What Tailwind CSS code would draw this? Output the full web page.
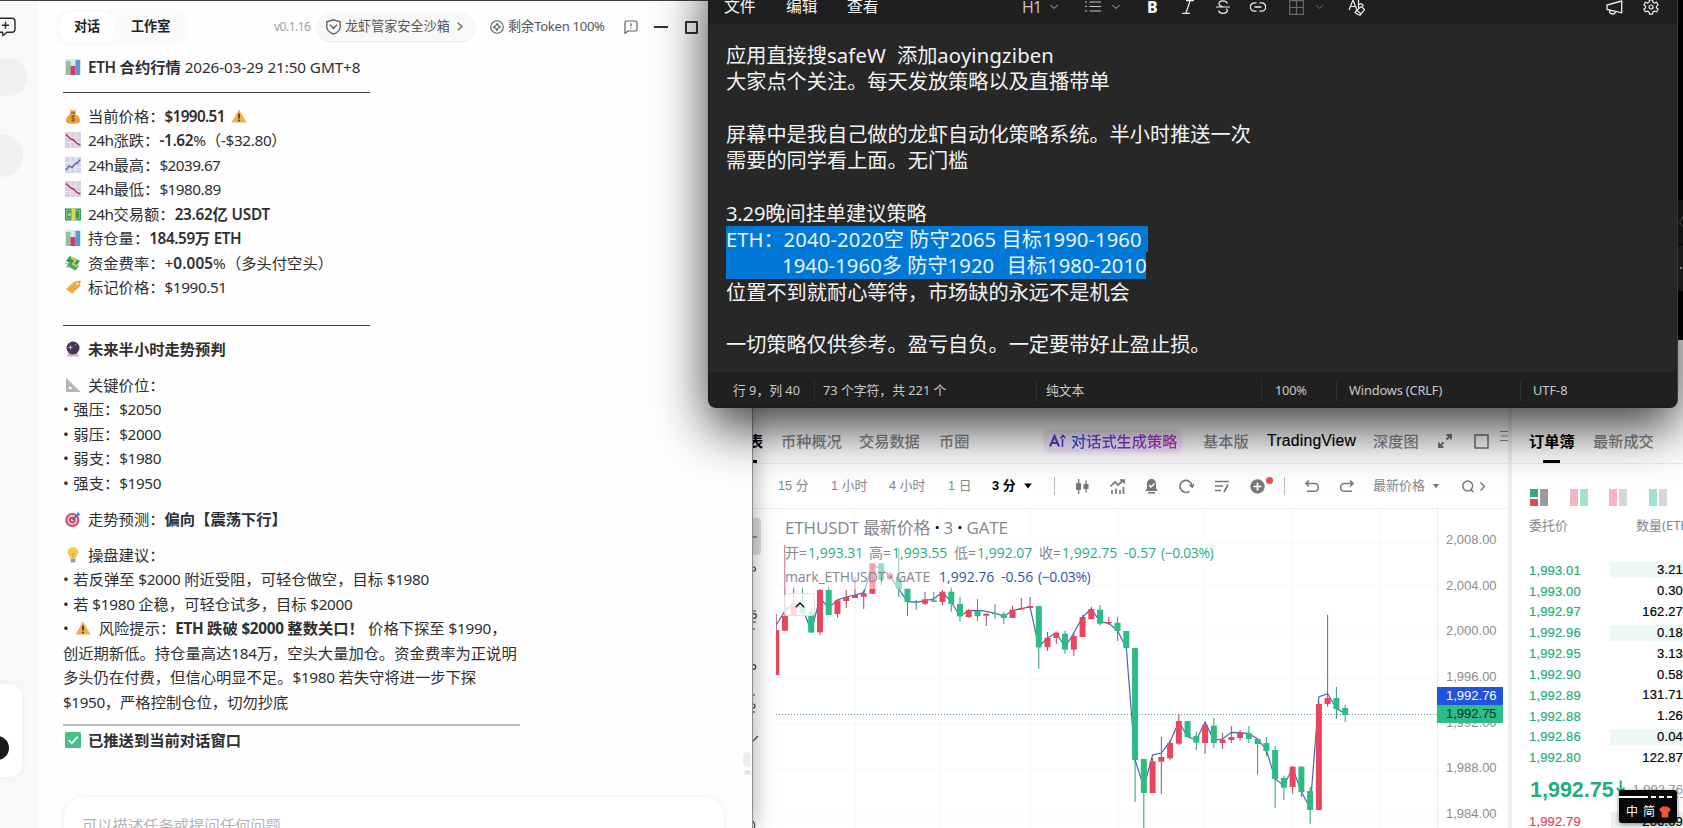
<!DOCTYPE html>
<html lang="zh-CN">
<head>
    <meta charset="UTF-8">
    <meta name="viewport" content="width=device-width, initial-scale=1.0">
    <title>ETH 合约行情</title>
    <script src="https://cdn.jsdelivr.net/npm/@tailwindcss/browser@4"></script>
</head>
<body class="relative w-[1683px] h-[828px] overflow-hidden bg-white font-['Noto_Sans','Noto_Sans_CJK_SC',sans-serif]">

    <!-- Shared icons -->
    <svg class="hidden">
        <symbol id="i-bars" viewBox="0 0 16 16"><rect width="16" height="16" fill="#dbe9ee"/><rect x="1" y="2" width="4.5" height="14" fill="#8fc29b"/><rect x="5.5" y="7" width="5" height="9" fill="#d23a6e"/><rect x="10.5" y="1" width="4.5" height="15" fill="#5a98d3"/></symbol>
        <symbol id="i-bag" viewBox="0 0 16 16"><path d="M5 1.5l3 1 3-1-1.2 4C13 7 15 10 15 12.500c0 2.500-2 3.200-7 3.200S1 15 1 12.500C1 10 3 7 6.200 5.500z" fill="#e9a23b"/><path d="M5.500 5h5" stroke="#8f5a1c" stroke-width="1.300"/><path d="M9.800 8.500c-1-1-3.500-.7-3.300.8.2 1.300 3.200.8 3.300 2.300.1 1.500-2.500 1.700-3.500.6M8 7.300v6.200" stroke="#8c4a16" fill="none"/></symbol>
        <symbol id="i-warn" viewBox="0 0 16 16"><path d="M8 1.500L15.500 14.500H.5z" fill="#f0ae4c"/><path d="M8 5.500v5" stroke="#3a2c18" stroke-width="1.600"/><circle cx="8" cy="12.500" r=".9" fill="#3a2c18"/></symbol>
        <symbol id="i-down" viewBox="0 0 16 16"><rect width="16" height="16" fill="#dccfdd"/><path d="M0 5.500h16M0 10.500h16M5.500 0v16M10.500 0v16" stroke="#f1eaf3" stroke-width=".8"/><path d="M.8 2.500L6 7l2.500 1 3 3.200L15.300 13" stroke="#b0386a" stroke-width="1.500" fill="none"/></symbol>
        <symbol id="i-up" viewBox="0 0 16 16"><rect width="16" height="16" fill="#d3d7e8"/><path d="M0 5.500h16M0 10.500h16M5.500 0v16M10.500 0v16" stroke="#f0f1f8" stroke-width=".8"/><path d="M.8 13L4 9l3 1.500L11 6l1 .5 3.300-4" stroke="#5c6fb4" stroke-width="1.500" fill="none"/></symbol>
        <symbol id="i-cash" viewBox="0 0 16 16"><rect y="2.500" width="16" height="12" fill="#2f9e50"/><rect x="1.500" y="4.500" width="13" height="8" fill="none" stroke="#8fd19a" stroke-width=".8"/><circle cx="4.500" cy="8.500" r="2" fill="#8fd19a"/><rect x="6.500" y="2.500" width="4" height="12" fill="#f0cf4b"/></symbol>
        <symbol id="i-fly" viewBox="0 0 16 16"><path d="M5 1l10 5-4 5L1 6z" fill="#2f9e50"/><path d="M4 7l10 4-3.500 4.500L2 11z" fill="#3fae5f"/><path d="M6 2.500l4.500 3L8 9l4 2.500" stroke="#d9d36a" stroke-width="1.800" fill="none"/><path d="M0 8l3 1M1 12l3 0" stroke="#8fa89a"/></symbol>
        <symbol id="i-tag" viewBox="0 0 16 16"><path d="M1 10L9.500 2.500 15 2l.3 5L7 14.800z" fill="#efa945"/><circle cx="12.700" cy="4.600" r="1.200" fill="#fff"/><path d="M13 4.500c1-3 2.500-3.500 2.800-1" stroke="#b07a3c" stroke-width=".8" fill="none"/></symbol>
        <symbol id="i-ball" viewBox="0 0 16 16"><path d="M3.500 12h9l1.500 3.500H2z" fill="#cdb4dc"/><circle cx="8" cy="7" r="6.500" fill="#4a3550"/><path d="M5.500 4.500v4M3.500 6.500h4" stroke="#d9b8e0"/><circle cx="10.500" cy="4" r=".8" fill="#b58fc4"/></symbol>
        <symbol id="i-ruler" viewBox="0 0 16 16"><path d="M1 .8L15.500 15H1zM4 8.500V12h3.700z" fill="#b4b4ba" fill-rule="evenodd"/></symbol>
        <symbol id="i-target" viewBox="0 0 16 16"><circle cx="7.300" cy="9" r="7" fill="#d8456c"/><circle cx="7.300" cy="9" r="4.900" fill="#f3d9e2"/><circle cx="7.300" cy="9" r="3.400" fill="#d8456c"/><circle cx="7.300" cy="9" r="1.200" fill="#fff"/><path d="M7.500 9L13 3.500" stroke="#3c6d9e" stroke-width="1.200"/><path d="M11 4l2-3.500.8 2 2 .6L13 5.500z" fill="#3f8fd8"/></symbol>
        <symbol id="i-bulb" viewBox="0 0 16 16"><path d="M8 .3c3.500 0 5.300 2.500 5.300 5 0 2.700-2.300 3.700-2.600 6H5.300C5 9 2.700 8 2.700 5.300c0-2.500 1.800-5 5.300-5z" fill="#f7c948"/><path d="M6.500 6l1.500 1.500L9.500 6M8 7.500V11" stroke="#d99a28" stroke-width=".8" fill="none"/><rect x="5.600" y="11.500" width="4.800" height="4" rx="1" fill="#9a9aa2"/></symbol>
        <symbol id="i-check" viewBox="0 0 16 16"><rect width="16" height="16" rx="1.500" fill="#43c082"/><path d="M3.500 8l3.200 3.200 6-6.400" stroke="#fff" stroke-width="1.700" fill="none"/></symbol>
        <symbol id="i-chev" viewBox="0 0 8 6"><path d="M.5 1L4 4.500 7.500 1" stroke="currentColor" fill="none"/></symbol>
    </svg>

    <!-- Exchange page -->
    <section class="absolute left-[753px] top-[400px] w-[930px] h-[428px] flex bg-white text-[#86878b]">
        <div class="w-[755px] flex flex-col">
            <nav class="h-[64px] pt-[19px] flex items-center text-[15.2px] font-medium whitespace-nowrap border-b border-[#ececec] overflow-hidden">
                <div class="relative w-[28px] h-full flex items-center overflow-hidden text-black font-bold"><span class="-ml-[5px]">表</span><span class="absolute left-0 bottom-0 w-[4px] h-[3px] bg-black"></span></div>
                <div class="w-[78px]">币种概况</div>
                <div class="w-[80px]">交易数据</div>
                <div class="w-[107px]">币圈</div>
                <div class="w-[157px] flex items-center">
                    <div class="flex items-center gap-[5px] px-[3px] h-[18px] rounded bg-[#e3c9f5]/40 shadow-[0_0_5px_1px_#e3c9f5]">
                        <svg class="w-[17px] h-[14px]" viewBox="0 0 17 14" fill="none" stroke="#5a35d8" stroke-width="2"><path d="M1 12.500L5.500 2l4.500 10.500M3 9h5"/><path d="M13.500 13V5M11.500 4.500L14 1.500l2 2.500" stroke-width="1.600"/></svg>
                        <span class="bg-gradient-to-r from-[#2d55d8] via-[#7a35d5] to-[#c32bc0] bg-clip-text text-transparent">对话式生成策略</span>
                    </div>
                </div>
                <div class="w-[64px]">基本版</div>
                <div class="w-[106px] text-[15.800px] text-black font-['Liberation_Sans',sans-serif] tracking-[0.2px] [-webkit-text-stroke:0.15px_black]">TradingView</div>
                <div class="w-[65px]">深度图</div>
                <svg class="w-[14px] h-[14px] mr-[22px]" viewBox="0 0 14 14" fill="none" stroke="#6f7074" stroke-width="1.800"><path d="M8.500 5.500L13 1M8.500 1H13v4.500M5.500 8.500L1 13M1 8.500V13h4.500"/></svg>
                <svg class="w-[15px] h-[15px] mr-[11px]" viewBox="0 0 15 15" fill="none" stroke="#6f7074" stroke-width="1.500"><path d="M1 1h13v13H1z"/></svg>
                <svg class="w-[8px] h-[12px] -mt-[10px]" viewBox="0 0 8 12" stroke="#8b8b8b"><path d="M0 1.500h8M1 6h7M0 10.500h8"/></svg>
            </nav>
            <div class="h-[45px] pl-[25px] flex items-center text-[12.8px] whitespace-nowrap border-b border-[#ececec] font-['Liberation_Sans','Noto_Sans_CJK_SC',sans-serif]">
                <span class="w-[53px]">15 分</span>
                <span class="w-[58px]">1 小时</span>
                <span class="w-[59px]">4 小时</span>
                <span class="w-[44px]">1 日</span>
                <span class="w-[32px] text-black font-bold">3 分</span>
                <svg class="w-[8px] h-[6px] mr-[22px]" viewBox="0 0 9 7"><path d="M0 .5h9L4.500 6.500z" fill="#000"/></svg>
                <span class="w-px h-[18px] bg-[#bdbdbd] mr-[20px]"></span>
                <svg class="w-[14px] h-[15px] mr-[21px]" viewBox="0 0 14 15" fill="#77787c"><path d="M1 4h5v7H1zM3 0h1.300v15H3zM8.500 5h5v5h-5zM10.400 1.500h1.300v12h-1.300z"/></svg>
                <svg class="w-[15px] h-[15px] mr-[20px]" viewBox="0 0 15 15" fill="none" stroke="#77787c" stroke-width="1.700"><path d="M.5 7.500L5 3l3 3 5.500-5M10 1h4v3.500M2 15v-4M6 15V9.500M10 15v-4M13.500 15V8"/></svg>
                <svg class="w-[13px] h-[15px] mr-[21px]" viewBox="0 0 13 15"><path d="M6.500 0C9.500 0 11 2.300 11 5v4.500l2 2.500H0l2-2.500V5c0-2.700 1.500-5 4.500-5z" fill="#77787c"/><path d="M3 13.800h7" stroke="#77787c" stroke-width="1.600"/><path d="M4 6l2 2 3.500-3.500" stroke="#fff" stroke-width="1.300" fill="none"/></svg>
                <svg class="w-[15px] h-[15px] mr-[21px]" viewBox="0 0 15 15" fill="none" stroke="#77787c" stroke-width="1.600"><path d="M10.500 12.300A6 6 0 1 1 13 7"/><path d="M10.500 6l2.800 2L15 5"/></svg>
                <svg class="w-[14px] h-[13px] mr-[21px]" viewBox="0 0 14 13" fill="none" stroke="#77787c" stroke-width="1.700"><path d="M0 1.500h14M0 6h8M0 10.500h6M13 4.500L9 12"/></svg>
                <span class="relative mr-[19px]">
                    <svg class="w-[15px] h-[15px]" viewBox="0 0 15 15"><circle cx="7.500" cy="7.500" r="7.200" fill="#77787c"/><path d="M7.500 3.500v8M3.500 7.500h8" stroke="#fff" stroke-width="1.700"/></svg>
                    <span class="absolute left-[16px] -top-[2px] size-[7px] rounded-full bg-[#e0524e]"></span>
                </span>
                <span class="w-px h-[18px] bg-[#bdbdbd] mr-[20px]"></span>
                <svg class="w-[14px] h-[13px] mr-[21px]" viewBox="0 0 14 13" fill="none" stroke="#77787c" stroke-width="1.600"><path d="M4 .5L1 3.500l3 3M1 3.500h8.500a3.900 3.900 0 0 1 0 7.800H2"/></svg>
                <svg class="w-[14px] h-[13px] mr-[19px]" viewBox="0 0 14 13" fill="none" stroke="#77787c" stroke-width="1.600"><path d="M10 .5l3 3-3 3M13 3.500H4.500a3.900 3.900 0 0 0 0 7.800H12"/></svg>
                <span class="w-[60px] text-[13px]">最新价格</span>
                <svg class="w-[6px] h-[5px] mr-[23px]" viewBox="0 0 6 5"><path d="M0 0h6L3 4.500z" fill="#77787c"/></svg>
                <svg class="w-[12px] h-[13px] mr-[6px]" viewBox="0 0 12 13" fill="none" stroke="#77787c" stroke-width="1.500"><circle cx="5.700" cy="6" r="4.900"/><path d="M8.500 9l2.700 3"/></svg>
                <svg class="w-[5px] h-[9px]" viewBox="0 0 5 9" fill="none" stroke="#77787c" stroke-width="1.500"><path d="M.5.5l4 4-4 4"/></svg>
            </div>
            <div class="relative flex-1">
                <svg id="chart" class="absolute left-0 -top-px w-[755px] h-[320px]" viewBox="753 508 755 320"></svg>
                <div class="absolute left-[32px] top-[5px] flex flex-col items-start whitespace-nowrap font-['Open_Sans','Noto_Sans_CJK_SC',sans-serif]">
                    <div class="h-[26px] leading-[27px] text-[17px] tracking-[-0.15px] bg-white/50">ETHUSDT 最新价格<b class="text-black"> · </b>3<b class="text-black"> · </b>GATE</div>
                    <div class="h-[24px] leading-[25px] flex text-[14px] bg-white/50 text-[#1fae7a]">
                        <span class="w-[23px] text-[#86878b]">开=</span><span class="w-[61px]">1,993.31</span>
                        <span class="w-[23px] text-[#86878b]">高=</span><span class="w-[62px]">1,993.55</span>
                        <span class="w-[23px] text-[#86878b]">低=</span><span class="w-[62px]">1,992.07</span>
                        <span class="w-[23px] text-[#86878b]">收=</span><span class="w-[62px]">1,992.75</span>
                        <span class="w-[37px]">-0.57</span><span class="tracking-[-0.4px]">(−0.03%)</span>
                    </div>
                    <div class="h-[25px] leading-[25px] flex text-[14px] bg-white/50 text-[#3550b5]">
                        <span class="w-[154px] text-[#86878b] tracking-[-0.1px]">mark_ETHUSDT · GATE</span><span class="w-[62px]">1,992.76</span>
                        <span class="w-[37px]">-0.56</span><span class="tracking-[-0.4px]">(−0.03%)</span>
                    </div>
                </div>
                <div class="absolute left-[31px] top-[84px] w-[31px] h-[23px] flex items-center justify-center rounded-sm border border-[#e3e3e3] bg-white/80">
                    <svg class="w-[10px] h-[6px]" viewBox="0 0 10 6"><path d="M.8 5.200L5 1l4.200 4.200" stroke="#111" stroke-width="1.500" fill="none"/></svg>
                </div>
                <div id="axis" class="absolute left-[685px] top-[8px] w-[65px] font-['Liberation_Sans',sans-serif] text-[13px] text-[#8b8c90]"></div>
                <div class="absolute left-[684px] top-[178px] w-[66px] font-['Liberation_Sans',sans-serif] text-[13px] leading-[18px]">
                    <div class="pl-[9px] h-[18px] bg-[#2352dd] text-white">1,992.76</div>
                    <div class="pl-[9px] h-[18px] bg-[#2bbe87] text-[#0b2c20]">1,992.75</div>
                </div>
            </div>
        </div>
        <div class="w-[4px] bg-[#efeff0]"></div>

        <!-- Order book -->
        <div class="flex-1 overflow-hidden whitespace-nowrap">
            <nav class="h-[64px] pt-[19px] pl-[17px] flex text-[15.2px] border-b border-[#ececec]">
                <div class="relative w-[64px] flex items-center font-bold text-black">订单簿<span class="absolute left-[14px] bottom-0 w-[17px] h-[3px] bg-black"></span></div>
                <div class="flex items-center font-medium">最新成交</div>
            </nav>
            <div class="h-[51px] pl-[18px] pt-[16px] flex items-center gap-[21.500px]">
                <div class="w-[18px] h-[17px] grid grid-cols-2 gap-[2px]"><div class="grid gap-[2px]"><i class="bg-[#2cae7c]"></i><i class="bg-[#e1455e]"></i></div><i class="bg-[#9a9ba2]"></i></div>
                <div class="w-[18px] h-[17px] grid grid-cols-2 gap-[2px]"><i class="bg-[#f8b3c1]"></i><i class="bg-[#a3e3cb]"></i></div>
                <div class="w-[18px] h-[17px] grid grid-cols-2 gap-[2px]"><i class="bg-[#f8b3c1]"></i><i class="bg-[#d7d7d9]"></i></div>
                <div class="w-[18px] h-[17px] grid grid-cols-2 gap-[2px]"><i class="bg-[#a3e3cb]"></i><i class="bg-[#d7d7d9]"></i></div>
            </div>
            <div class="h-[45px] pl-[17px] pt-px flex text-[13px]"><span class="w-[107px] shrink-0">委托价</span><span>数量(ETH)</span></div>
            <div id="book" class="pl-[17px] font-['Liberation_Sans',sans-serif] text-[13px] tracking-[0.15px] [-webkit-text-stroke:0.2px_currentColor]"></div>
            <div class="h-[43px] pl-[18px] flex items-center font-['Liberation_Sans',sans-serif]">
                <span class="w-[92px] text-[21.500px] font-bold text-[#1fae7a]">1,992.75</span>
                <svg class="w-[10px] h-[14px] mr-[7px] -mt-[5px]" viewBox="0 0 10 14" fill="none" stroke="#1fae7a" stroke-width="2.200"><path d="M5 0v12M1 8l4 4.500L9 8"/></svg>
                <span class="text-[13px] text-[#9a9a9a] border-b border-dashed border-[#9a9a9a] leading-[15px]">1,992.76</span>
            </div>
            <div class="pl-[17px] flex items-center h-[20px] font-['Liberation_Sans',sans-serif] text-[13px] tracking-[0.15px] [-webkit-text-stroke:0.2px_currentColor]"><span class="w-[82px] text-[#e1455e]">1,992.79</span><span class="flex-1 bg-[#eaf3f0] text-right text-black">206.09</span></div>
        </div>
    </section>

    <!-- Dark window peeking out at the right edge -->
    <div class="absolute left-[1670px] top-0 w-[13px] h-[340px] flex flex-col bg-black pt-[200px]">
        <div class="h-[44px] bg-[#1d1d1d] flex items-center justify-end"><svg class="w-[4px] h-[12px]" viewBox="0 0 4 12" fill="none" stroke="#666"><path d="M4 1L.5 6 4 11"/></svg></div>
        <div class="h-[46px] mt-px bg-[#262626] flex items-center justify-end"><i class="size-[2px] mr-px bg-[#bbb]"></i></div>
    </div>

    <!-- Assistant window -->
    <section class="absolute left-0 top-0 w-[753px] h-[828px] flex bg-[#fefefe] border-t border-[#3f3f42] border-r border-r-[#8d8d8d] shadow-[0_0_22px_rgba(0,0,0,0.35)] text-[#2f2f31]">
        <aside class="relative w-[37px] bg-[#f9f9f9] border-r border-[#f1f1f1] overflow-hidden">
            <svg class="absolute left-[-5px] top-[16px] w-[21px] h-[20px]" viewBox="0 0 21 20" fill="none" stroke="#2b2b2d" stroke-width="1.400"><path d="M5 1.200h12a3 3 0 0 1 3 3v8a3 3 0 0 1-3 3h-5l-4 3.300-.5-3.300H5M10.500 4.800v7M7 8.300h7"/></svg>
            <div class="absolute -left-[20px] top-[57px] w-[47px] h-[38px] rounded-full bg-[#f0f0f0]"></div>
            <div class="absolute -left-[20px] top-[133px] w-[43px] h-[43px] rounded-full bg-[#f0f0f0]"></div>
            <div class="absolute -left-[20px] top-[683px] w-[42px] h-[93px] rounded-xl bg-white shadow-[0_0_8px_rgba(0,0,0,0.06)]"></div>
            <div class="absolute -left-[15px] top-[735px] size-[24px] rounded-full bg-[#1b1b1b]"></div>
        </aside>
        <div class="flex-1 flex flex-col overflow-hidden whitespace-nowrap [&_p]:whitespace-pre">
            <header class="h-[53px] shrink-0 pb-px pl-[18px] flex items-center text-[13.100px] text-[#55565a]">
                <div class="w-[132px] h-[37px] rounded-2xl bg-[#fafafa] flex items-center font-bold text-[#1f1f21]"><span class="ml-[5px] w-[54px] h-[30px] rounded-xl bg-white flex items-center justify-center">对话</span><span class="ml-[17px]">工作室</span></div>
                <span class="ml-[87px] w-[42px] text-[12px] tracking-[-0.5px] text-[#9d9da0]">v0.1.16</span>
                <div class="w-[160px] h-[30px] rounded-full bg-[#f8f8f8] border-b border-[#e9e9e9] flex items-center pl-[10px]">
                    <svg class="w-[15px] h-[16px] mr-[4px]" viewBox="0 0 15 16" fill="none" stroke="#5d5e62" stroke-width="1.300"><path d="M7.500.8l6.700 2v5c0 3.700-3 6-6.700 7.400C3.800 13.800.8 11.500.8 7.800v-5zM4 5.800l3.500 3.700L11 5.800"/></svg>
                    <span>龙虾管家安全沙箱</span>
                    <svg class="w-[6px] h-[9px] ml-[7px]" viewBox="0 0 6 9" fill="none" stroke="#5d5e62" stroke-width="1.200"><path d="M.7.700l4.300 3.800L.7 8.300"/></svg>
                </div>
                <svg class="w-[14px] h-[14px] ml-[14px] mr-[4px]" viewBox="0 0 14 14" fill="none" stroke="#5d5e62" stroke-width="1.100"><circle cx="7" cy="7" r="6.300"/><path d="M7 3.500L8.200 5.800 10.500 7 8.200 8.200 7 10.500 5.800 8.200 3.500 7l2.300-1.200z"/></svg>
                <span class="w-[115px]">剩余<span class="tracking-[-0.3px]">Token 100%</span></span>
                <svg class="w-[14px] h-[14px] mr-[16px] ml-px" viewBox="0 0 14 14" fill="none" stroke="#5d5e62" stroke-width="1.200"><path d="M2.500 1h9A1.500 1.500 0 0 1 13 2.500v7a1.500 1.500 0 0 1-1.500 1.500H4l-3 2.300V2.500A1.500 1.500 0 0 1 2.500 1zM7 3.200v3M7 7.500v1"/></svg>
                <span class="w-[14px] h-[2px] bg-[#333] mr-[17px]"></span>
                <span class="size-[13px] border-2 border-[#333] rounded-[1px]"></span>
            </header>
            <div class="pl-[26px] pt-px text-[15.300px] leading-[24.500px]">
                <div class="flex items-center"><svg class="size-[16px] ml-[2px] mr-[7px]"><use href="#i-bars"/></svg><p><b class="font-semibold"><span class="tracking-[-0.4px]">ETH</span> 合约行情</b><span class="tracking-[-0.1px]"> 2026-03-29 21:50 GMT+8</span></p></div>
                <hr class="w-[307px] mt-[12px] mb-[11px] border-[#3a3a3c]">
                <div class="flex items-center"><svg class="size-[16px] ml-[2px] mr-[7px]"><use href="#i-bag"/></svg><p>当前价格：<b class="font-semibold tracking-[-0.65px]">$1990.51</b></p><svg class="size-[16px] ml-[6px]"><use href="#i-warn"/></svg></div>
                <div class="flex items-center"><svg class="size-[16px] ml-[2px] mr-[7px]"><use href="#i-down"/></svg><p><span class="tracking-[-0.5px]">24h</span>涨跌：<span class="tracking-[-0.3px]"><b class="font-semibold">-1.62</b>%</span>（<span class="tracking-[-0.35px]">-$32.80</span>）</p></div>
                <div class="flex items-center"><svg class="size-[16px] ml-[2px] mr-[7px]"><use href="#i-up"/></svg><p><span class="tracking-[-0.5px]">24h</span>最高：<span class="tracking-[-0.55px]">$2039.67</span></p></div>
                <div class="flex items-center"><svg class="size-[16px] ml-[2px] mr-[7px]"><use href="#i-down"/></svg><p><span class="tracking-[-0.5px]">24h</span>最低：<span class="tracking-[-0.5px]">$1980.89</span></p></div>
                <div class="flex items-center"><svg class="size-[16px] ml-[2px] mr-[7px]"><use href="#i-cash"/></svg><p><span class="tracking-[-0.5px]">24h</span>交易额：<b class="font-semibold"><span class="tracking-[-0.3px]">23.62</span>亿<span class="tracking-[-0.2px]"> USDT</span></b></p></div>
                <div class="flex items-center"><svg class="size-[16px] ml-[2px] mr-[7px]"><use href="#i-bars"/></svg><p>持仓量：<b class="font-semibold"><span class="tracking-[-0.4px]">184.59</span>万<span class="tracking-[-0.4px]"> ETH</span></b></p></div>
                <div class="flex items-center"><svg class="size-[16px] ml-[2px] mr-[7px]"><use href="#i-fly"/></svg><p>资金费率：<span class="tracking-[0.1px]">+<b class="font-semibold">0.005</b>%</span>（多头付空头）</p></div>
                <div class="flex items-center"><svg class="size-[16px] ml-[2px] mr-[7px]"><use href="#i-tag"/></svg><p>标记价格：<span class="tracking-[-0.4px]">$1990.51</span></p></div>
                <hr class="w-[307px] mt-[25px] mb-[11.500px] border-[#3a3a3c]">
                <div class="flex items-center font-bold"><svg class="size-[16px] ml-[2px] mr-[7px]"><use href="#i-ball"/></svg>未来半小时走势预判</div>
                <div class="flex items-center mt-[11px]"><svg class="size-[16px] ml-[2px] mr-[7px]"><use href="#i-ruler"/></svg>关键价位：</div>
                <p><span class="tracking-[0.3px]">• </span>强压：<span class="tracking-[-0.4px]">$2050</span></p>
                <p><span class="tracking-[0.3px]">• </span>弱压：<span class="tracking-[-0.4px]">$2000</span></p>
                <p><span class="tracking-[0.3px]">• </span>弱支：<span class="tracking-[-0.4px]">$1980</span></p>
                <p><span class="tracking-[0.3px]">• </span>强支：<span class="tracking-[-0.4px]">$1950</span></p>
                <div class="flex items-center mt-[11.500px]"><svg class="size-[16px] ml-[2px] mr-[7px]"><use href="#i-target"/></svg><p>走势预测：<b>偏向【震荡下行】</b></p></div>
                <div class="flex items-center mt-[11.500px]"><svg class="size-[16px] ml-[2px] mr-[7px]"><use href="#i-bulb"/></svg>操盘建议：</div>
                <p><span class="tracking-[0.3px]">• </span>若反弹至<span class="tracking-[-0.3px]"> $2000 </span>附近受阻，可轻仓做空，目标<span class="tracking-[-0.3px]"> $1980</span></p>
                <p><span class="tracking-[0.3px]">• </span>若<span class="tracking-[-0.3px]"> $1980 </span>企稳，可轻仓试多，目标<span class="tracking-[-0.3px]"> $2000</span></p>
                <div class="flex items-center"><p>• </p><svg class="size-[16px] ml-[2px] mr-[8px]"><use href="#i-warn"/></svg><p>风险提示：<b><span class="tracking-[-0.3px]">ETH </span>跌破<span class="tracking-[-0.3px]"> $2000 </span>整数关口！</b><span class="tracking-[0.3px]"> </span>价格下探至<span class="tracking-[-0.2px]"> $1990</span>，</p></div>
                <p>创近期新低。持仓量高达<span class="tracking-[-0.3px]">184</span>万，空头大量加仓。资金费率为正说明</p>
                <p>多头仍在付费，但信心明显不足。<span class="tracking-[-0.3px]">$1980 </span>若失守将进一步下探</p>
                <p><span class="tracking-[-0.4px]">$1950</span>，严格控制仓位，切勿抄底</p>
                <hr class="w-[457px] mt-[10px] mb-[2px] border-t-2 border-[#bdbdbd]">
                <div class="flex items-center font-bold"><svg class="size-[16px] ml-[2px] mr-[7px]"><use href="#i-check"/></svg>已推送到当前对话窗口</div>
            </div>
            <div class="mt-[43px] ml-[26px] w-[662px] h-[60px] shrink-0 rounded-[20px] border border-[#f4f4f4] bg-white shadow-[0_0_8px_rgba(0,0,0,0.03)] pl-[18px] pt-[16px] text-[15.300px] text-[#b4b4b6] leading-[24px]">可以描述任务或提问任何问题</div>
        </div>
        <div class="absolute left-[743px] top-[751px] w-[8px] h-[15px] rounded bg-[#ececec]"></div>
        <div class="absolute left-[744px] top-[769px] w-[7px] h-[5px] rounded bg-[#e6e6e6]"></div>
    </section>

    <!-- Notepad window -->
    <section class="absolute left-[708px] -top-[40px] w-[970px] h-[448px] rounded-[8px] overflow-hidden flex flex-col bg-[#272727] border border-[#1a1a1a] border-r-[#3a3a3a] text-[#f4f4f4] whitespace-nowrap [&_p]:whitespace-pre">
        <div class="h-[63px] pt-[29px] shrink-0 bg-[#1f1f1f] flex items-center text-[15.800px]">
            <span class="w-[62px] ml-[15px]">文件</span>
            <span class="w-[61px]">编辑</span>
            <span class="w-[175px]">查看</span>
            <span class="w-[28px] text-[16px] text-[#c8c8c8] font-['Open_Sans',sans-serif] tracking-[-0.8px]">H1</span>
            <svg class="w-[8px] h-[6px] mr-[27px] text-[#bbb]"><use href="#i-chev"/></svg>
            <svg class="w-[16px] h-[12px] mr-[11px]" viewBox="0 0 16 12" stroke="#c8c8c8" stroke-width="1.200"><path d="M0 1h2M4.500 1H16M0 5.500h2M4.500 5.500H16M0 10h2M4.500 10H16"/></svg>
            <svg class="w-[8px] h-[6px] mr-[27px] text-[#bbb]"><use href="#i-chev"/></svg>
            <span class="w-[34px] text-[16px] font-extrabold">B</span>
            <svg class="w-[14px] h-[14px] mr-[21px]" viewBox="0 0 14 14" fill="none" stroke="#eee" stroke-width="1.200"><path d="M5 .7h8M1 13.300h8M9 1L5 13"/></svg>
            <svg class="w-[14px] h-[14px] mr-[20px]" viewBox="0 0 14 14" fill="none" stroke="#eee" stroke-width="1.200"><path d="M11.500 3.500C10 0 3 0 3 3.700 3 5.500 4.500 6.300 7 6.800M0 7h14M10.500 8.500C13 12 9 13.300 7 13.300c-2.200 0-4-.8-4.500-2.800"/></svg>
            <svg class="w-[16px] h-[10px] mr-[23px]" viewBox="0 0 16 10" fill="none" stroke="#eee" stroke-width="1.300"><path d="M6.500.8h-2a4 4 0 0 0 0 8.400h2M9.500.8h2a4 4 0 0 1 0 8.400h-2M4.500 5h7"/></svg>
            <svg class="w-[15px] h-[15px] mr-[11px]" viewBox="0 0 15 15" fill="none" stroke="#6a6a6a" stroke-width="1.200"><path d="M.7.7h13.600v13.600H.7zM.7 7.500h13.600M7.500.7v13.600"/></svg>
            <svg class="w-[9px] h-[6px] mr-[24px] text-[#6a6a6a]"><use href="#i-chev"/></svg>
            <svg class="w-[17px] h-[19px] mr-[241px]" viewBox="0 0 17 19" fill="none" stroke="#eee" stroke-width="1.200"><path d="M1 12L5 2l4 10M2.300 8.500h5.400M10.500 2v9M10.500 7c1.500-2 5-1.500 4.500 1.500M9.500 11.500l4-3 3 3.200-4.500 5.500-3.500-1.500-1.500-1.500zM9 12.500l3.500 3"/></svg>
            <svg class="w-[17px] h-[16px] mr-[20px]" viewBox="0 0 17 16" fill="none" stroke="#eee" stroke-width="1.300"><path d="M15.700 2L1 6v4.500l14.700 3.300zM3.500 11.300c0 2.500 1 3.700 3 3.700s2.800-1 2.800-2.500"/></svg>
            <svg class="w-[16px] h-[16px]" viewBox="0 0 16 16" fill="none" stroke="#eee" stroke-width="1.200"><path d="M6.500 1h3l.5 2.200 1.400.8 2.200-.7 1.500 2.600-1.700 1.500v1.300l1.700 1.500-1.500 2.600-2.200-.7-1.400.8-.5 2.200h-3L6 12.900l-1.400-.8-2.200.7-1.500-2.600 1.700-1.500V7.400L.9 5.900l1.500-2.600 2.200.7L6 3.200z"/><circle cx="8" cy="8" r="2"/></svg>
        </div>
        <div class="flex-1 pt-[18px] pl-[17px] text-[20.200px] leading-[26.300px]">
            <p>应用直接搜<span class="tracking-[0.2px]">safeW  </span>添加<span class="tracking-[0.2px]">aoyingziben</span></p>
            <p>大家点个关注。每天发放策略以及直播带单</p>
            <p> </p>
            <p>屏幕中是我自己做的龙虾自动化策略系统。半小时推送一次</p>
            <p>需要的同学看上面。无门槛</p>
            <p> </p>
            <p><span class="tracking-[-0.2px]">3.29</span>晚间挂单建议策略</p>
            <p class="w-[422px] bg-[#0078d7] text-[#e6f5ff]">ETH：<span class="tracking-[0.15px]">2040-2020</span>空 防守<span class="tracking-[0.1px]">2065</span> 目标<span class="tracking-[0.1px]">1990-1960 </span></p>
            <p class="w-[420px] pl-[56px] bg-[#0078d7] text-[#e6f5ff]"><span class="tracking-[0.1px]">1940-1960</span>多 防守<span class="tracking-[0.1px]">1920</span><span class="tracking-[-1.1px]">   </span>目标<span class="tracking-[0.1px]">1980-2010</span></p>
            <p>位置不到就耐心等待，市场缺的永远不是机会</p>
            <p> </p>
            <p>一切策略仅供参考。盈亏自负。一定要带好止盈止损。</p>
        </div>
        <div class="h-[35px] pt-[8px] pb-[6px] shrink-0 bg-[#202020] flex text-[12.800px] leading-[21px] text-[#c9c9c9]">
            <span class="w-[106px] pl-[24px] border-r border-[#2f2f2f]">行 9，列 40</span>
            <span class="w-[222px] pl-[8px] border-r border-[#2f2f2f]">73 个字符，共 221 个</span>
            <span class="w-[225px] pl-[9px] border-r border-[#2f2f2f]">纯文本</span>
            <span class="w-[75px] pl-[13px] border-r border-[#2f2f2f] tracking-[-0.2px]">100%</span>
            <span class="w-[184px] pl-[12px] border-r border-[#2f2f2f] tracking-[-0.15px]">Windows (CRLF)</span>
            <span class="pl-[12px]">UTF-8</span>
        </div>
    </section>
    <div class="absolute left-[708px] -top-[40px] w-[970px] h-[448px] rounded-[8px] shadow-[0_20px_52px_rgba(0,0,0,0.76)] pointer-events-none"></div>

    <!-- Input method bar -->
    <div class="absolute left-[1619px] top-[790px] w-[58px] h-[33px] rounded-[3px] bg-[#080808] shadow-[0_1px_4px_rgba(0,0,0,0.5)] text-white">
        <div class="pt-[6px] h-[8px] flex gap-[3px]"><i class="w-[29px] bg-white"></i><i class="w-[5px] bg-white"></i><i class="w-[5px] bg-white"></i><i class="w-[5px] bg-white"></i></div>
        <div class="flex items-center h-[27px] pl-[7px] gap-[5px] text-[12px] leading-none"><span>中</span><span>简</span><svg class="w-[12px] h-[12px] -ml-px" viewBox="0 0 12 12"><path d="M3.500.5h5l3.300 2.800-1.500 2.800-1 .2V11.500H2.700V6.300l-1-.2L.2 3.300z" fill="#f0562f"/></svg></div>
    </div>

    <script>
        const RED = '#e8465f';
        const GREEN = '#2bbd85';

        // colour, body top, body bottom, wick top, wick bottom
        const candles = [
            ['r',630,675,614,675],['r',616,630.7,545,631],['r',606,616,587,616],['g',607,613,587,616],['g',611.5,632.5,608,633],
            ['r',590,632.3,589,635],['g',590,615,586,615],['r',600.3,614,599,617.7],['r',597,601,590,608],['r',595,598,577,598],
            ['r',593.3,596.7,590,609],['r',563.3,593.7,563,594],['g',563.3,580,563,585],['r',574,579,572,580],['g',577,589,547,597],
            ['g',588.7,602,588,616],['g',601.3,602.5,600,610],['r',599.3,603.7,591.7,605],['g',600.3,602,592,602],['r',591.7,602,590,605],
            ['g',591.7,604,587,611.7],['g',604,616.3,597,621.7],['r',610,617,609,618],['g',611,616,599,621],['r',613.7,615.7,613,626],
            ['g',613,614.2,603.7,619],['g',614,618,612,624],['r',609.7,618,605.7,618],['r',608,609.5,598,610],['r',606,608,597,608],
            ['g',606,647.3,606,668.7],['r',637.7,647.3,632,651],['r',632.7,638,631.7,644],['g',633.7,649.7,630.7,653.7],['r',636,649.7,632,656],
            ['r',617,637,615,637],['r',609,619.3,606.7,619.3],['g',609.7,623.7,605,625.7],['r',622,623.3,616.7,625],['g',622.7,631,616.7,641],
            ['g',631,648,631,648],['g',648,760,648,802],['g',759,793,759,828],['r',761.3,793,758,793],['r',757,761.7,736.7,794],
            ['r',743,758.3,740,760],['r',721,743.7,714,745],['g',721,737,721,737],['g',736,742.7,731.7,750],['r',725,743,722,754],
            ['g',725.7,743,717.7,747.7],['r',739.7,743,733,749],['r',737,740,726,743],['r',732.7,738,730,740.7],['g',733.3,739,726,743],
            ['g',739,744,739,774.7],['g',743,751,737,756],['g',750,779,746,808],['g',778,787.7,775.7,800],['r',766.7,787,766,793.7],
            ['g',766.7,792,766,797],['g',791,810,787,823.7],['r',704,810,702,810],['r',698,704,614.7,706.7],['g',698,709,687,718.7],
            ['g',708,715,705,722]
        ];
        const mark = [625,611,603,608,631,598,608,600,597,595,592.7,565,569,576,589,601.7,602.3,600.7,599,592,602,616,610.7,610.3,611.3,613.3,616,
            610.7,608.7,606.7,647,637.7,633,647,633,617,609,621.7,623.3,630.7,648,760,787,755,753,741.7,721.7,736.7,740,722,740,739,732.3,732.7,
            733.7,739,750,779,785.7,768,792,808,696.7,694,708.3,713.7];
        const cx = i => 776.2 + 8.753 * i;

        let svg = '';
        [543, 586, 632, 678, 724, 770, 816].forEach(y => svg += `<path d="M776 ${y}H1437" stroke="#f7f7f8"/>`);
        [855, 941, 1030, 1118, 1205, 1293, 1381].forEach(x => svg += `<path d="M${x} 508V828" stroke="#f7f7f8"/>`);
        svg += '<path d="M1437.5 508V828" stroke="#ececee"/>';
        svg += '<path d="M776 714.5H1437" stroke="#5f9f8c" stroke-dasharray="1 2"/>';
        svg += '<clipPath id="area"><path d="M776 508h661v320H776z"/></clipPath><g clip-path="url(#area)">';
        candles.forEach(([c, t, b, wt, wb], i) => svg += `<path d="M${cx(i)} ${wt}V${wb}" stroke="${c === 'r' ? '#a8475f' : '#2b9c73'}" stroke-width="1"/>`);
        svg += `<polyline points="${mark.map((y, i) => cx(i) + ',' + y).join(' ')}" fill="none" stroke="#4866b4" stroke-width="1.2"/>`;
        candles.forEach(([c, t, b], i) => svg += `<rect x="${cx(i) - 3}" y="${t}" width="6" height="${b - t}" fill="${c === 'r' ? RED : GREEN}"/>`);
        svg += '</g>';

        // Drawing toolbar that shows from behind the assistant window
        svg += '<rect x="745" y="518" width="16" height="37" rx="4" fill="#dcdcdc"/>';
        svg += '<g fill="none" stroke="#444" stroke-width="1.200"><path d="M753 537h4M753 611h3M753 622h3M753 629h2M753 695h2M753 712h2M753 741l5-5M753 821q3 4 1 7"/><circle cx="753.500" cy="569" r="2"/><circle cx="754" cy="616" r="2.300"/><circle cx="753.500" cy="667" r="2.300"/><circle cx="753" cy="706" r="2"/></g>';
        document.getElementById('chart').innerHTML = svg;

        document.getElementById('axis').innerHTML = ['2,008.00', '2,004.00', '2,000.00', '1,996.00', '1,992.00', '1,988.00', '1,984.00']
            .map(v => `<div class="h-[45.7px] leading-[45.7px] pl-[8px]">${v}</div>`).join('');

        const bids = [['1,993.01', '3.21', 1], ['1,993.00', '0.30'], ['1,992.97', '162.27'], ['1,992.96', '0.18', 1], ['1,992.95', '3.13'],
            ['1,992.90', '0.58'], ['1,992.89', '131.71'], ['1,992.88', '1.26'], ['1,992.86', '0.04', 1], ['1,992.80', '122.87']];
        document.getElementById('book').innerHTML = bids.map(([price, qty, bar]) => `
            <div class="h-[20.850px] flex items-center">
                <span class="w-[81px] text-[#1fae7a]">${price}</span>
                <span class="flex-1 h-[16px] leading-[16px] text-right text-black ${bar ? 'bg-[#eef9f5]' : ''}">${qty}</span>
            </div>`).join('');
    </script>
</body>
</html>
